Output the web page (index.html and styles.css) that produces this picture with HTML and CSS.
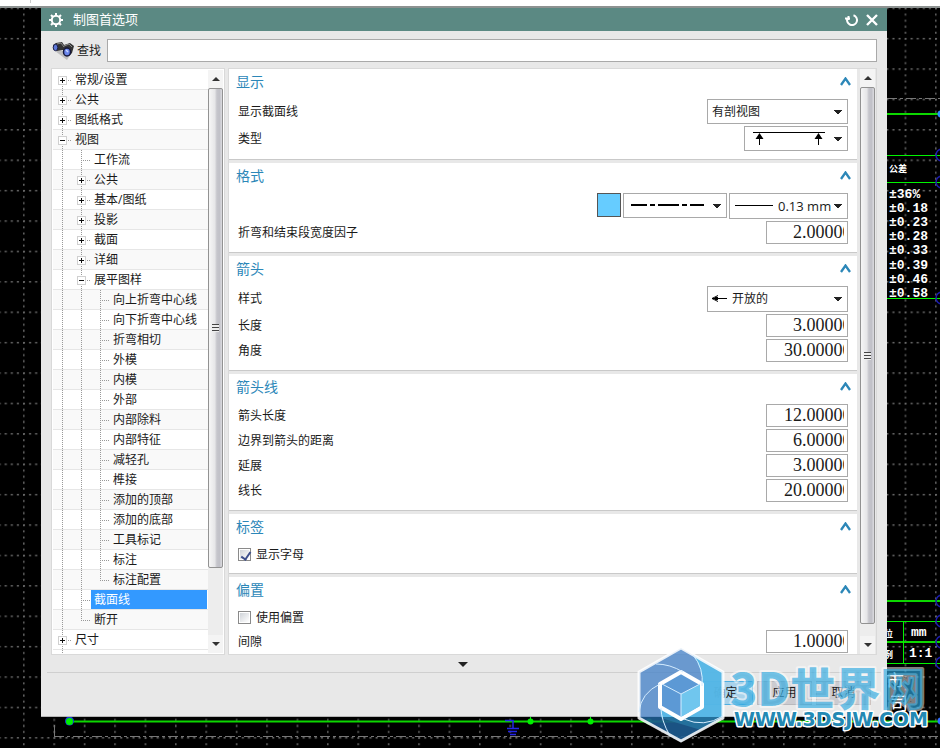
FILE: index.html
```html
<!DOCTYPE html>
<html lang="zh-CN">
<head>
<meta charset="utf-8">
<title>制图首选项</title>
<link rel="stylesheet" href="styles.css">
</head>
<body>
<svg class="cad" aria-hidden="true">
  <defs>
    <pattern id="grid" x="23" y="7.5" width="30.4" height="30.4" patternUnits="userSpaceOnUse">
      <path d="M0 .8H30.4" stroke="#707070" stroke-width="1.5" stroke-dasharray="2 4.08"/>
      <path d="M.8 0V30.4" stroke="#666" stroke-width="1.5" stroke-dasharray="2 4.08"/>
    </pattern>
  </defs>
  <rect y="7" width="100%" height="100%" fill="#000"/>
  <rect y="8" width="100%" height="100%" fill="url(#grid)"/>
  <rect width="100%" height="6" fill="#fff"/>
  <rect y="6" width="100%" height="2" fill="#8d9291"/>
  <path d="M30.500 0V3" stroke="#ccc"/>
  <g fill="none" stroke="#777"><path d="M887 98.500H940M54 736.500H940" stroke-dasharray="10 3 3 3"/><path d="M54.500 725V736"/></g>
  <g fill="none" stroke="#0cd800">
    <path d="M887 114H940M887 601H940M887 642H940M69 721.500H940" stroke-width="2"/>
    <path d="M887 155.500H940M887 182.500H940M887 298.500H940M887 621.500H940M887 663.500H940M903.500 621V663" stroke="#00f400"/>
  </g>
  <g fill="none" stroke="#1c1cae" stroke-width="1.500"><circle cx="942" cy="155" r="6"/><circle cx="942" cy="182" r="6"/><circle cx="942" cy="298" r="6"/><circle cx="942" cy="601" r="6"/><circle cx="942" cy="621" r="6"/><circle cx="942" cy="642" r="6"/><circle cx="942" cy="663" r="6"/></g>
  <circle cx="941" cy="114" r="3.500" fill="#2b8cff"/><circle cx="941" cy="721" r="3.500" fill="#2b6cff"/>
  <circle cx="69.500" cy="721" r="4.500" fill="#1838d8"/>
  <g fill="#00f000"><circle cx="69.500" cy="721.500" r="3.500"/><circle cx="530.500" cy="721.500" r="3"/><circle cx="590.500" cy="721.500" r="3"/><circle cx="649" cy="721.500" r="3"/><path d="M530 717h1v4h-1zM590 717h1v4h-1z"/></g>
  <path d="M505 720.500H513V728M507 728.500H519M508 731.500H517M510 734.500H516" stroke="#2424e8" stroke-width="1.500" fill="none"/>
  <g class="cad-text">
    <text x="889" y="172" class="cad-small">公差</text>
    <text x="889" y="198">±36%</text><text x="889" y="212">±0.18</text><text x="889" y="226">±0.23</text><text x="889" y="240">±0.28</text><text x="889" y="254">±0.33</text><text x="889" y="269">±0.39</text><text x="889" y="283">±0.46</text><text x="889" y="297">±0.58</text>
    <text x="884" y="637" class="cad-small">位</text><text x="884" y="658" class="cad-small">例</text>
    <text x="911" y="636">mm</text><text x="909" y="657">1:1</text>
    <text x="886" y="688" class="cad-large">市</text><text x="890" y="710" class="cad-large">司</text>
  </g>
</svg>

<main class="dialog">
  <header class="titlebar">
    <svg class="gear" viewBox="0 0 14 14" width="14" height="14" aria-hidden="true"><circle cx="7" cy="7" r="4.200" fill="none" stroke="#fff" stroke-width="2"/><path d="M7 0V3M7 11V14M0 7H3M11 7H14M2 2L4 4M10 10L12 12M12 2L10 4M2 12L4 10" stroke="#fff" stroke-width="2"/></svg>
    <h1>制图首选项</h1>
    <button class="title-btn" aria-label="重置"><svg width="14" height="14" viewBox="0 0 14 14"><path d="M8.500 2.300A5 5 0 1 1 2.500 5M0 5.500H5M3.500 3V7" fill="none" stroke="#fff" stroke-width="2"/></svg></button>
    <button class="title-btn" aria-label="关闭"><svg width="14" height="14" viewBox="0 0 14 14"><path d="M2 2L12 12M12 2L2 12" stroke="#fff" stroke-width="2.400"/></svg></button>
  </header>

  <div class="search">
    <svg width="22" height="18" viewBox="0 0 22 18" aria-hidden="true"><path d="M3 9L15 18L20 10L12 9Z" fill="#bdbdbd"/><path d="M1 3L4 1L10 0L12 3L18 1L22 4L20 11L17 14L13 13L11 8L5 9L1 6Z" fill="#333"/><path d="M5 2L9 1L12 5M12 4L17 2L20 5" stroke="#8a8a8a" fill="none"/><ellipse cx="3.500" cy="5.500" rx="2.300" ry="3.200" fill="#5e78d8" stroke="#1d2148"/><ellipse cx="15" cy="10" rx="3.500" ry="4" fill="#6a86ec" stroke="#15183c" stroke-width="1.500"/><path d="M14 8L16 10" stroke="#c9d6ff" stroke-width="1.500"/></svg>
    <label for="find">查找</label>
    <input id="find" type="text">
  </div>

  <div class="panels">
    <nav class="tree-panel" aria-label="类别">
      <ul class="tree">
        <li><button class="rail first" aria-label="展开"><i class="plus"></i></button><span>常规/设置</span></li>
        <li><button class="rail" aria-label="展开"><i class="plus"></i></button><span>公共</span></li>
        <li><button class="rail" aria-label="展开"><i class="plus"></i></button><span>图纸格式</span></li>
        <li><button class="rail" aria-label="折叠"><i class="minus"></i></button><span>视图</span></li>
        <li><b class="rail"></b><b class="rail tee"></b><span>工作流</span></li>
        <li><b class="rail"></b><button class="rail" aria-label="展开"><i class="plus"></i></button><span>公共</span></li>
        <li><b class="rail"></b><button class="rail" aria-label="展开"><i class="plus"></i></button><span>基本/图纸</span></li>
        <li><b class="rail"></b><button class="rail" aria-label="展开"><i class="plus"></i></button><span>投影</span></li>
        <li><b class="rail"></b><button class="rail" aria-label="展开"><i class="plus"></i></button><span>截面</span></li>
        <li><b class="rail"></b><button class="rail" aria-label="展开"><i class="plus"></i></button><span>详细</span></li>
        <li><b class="rail"></b><button class="rail" aria-label="折叠"><i class="minus"></i></button><span>展平图样</span></li>
        <li><b class="rail"></b><b class="rail"></b><b class="rail tee"></b><span>向上折弯中心线</span></li>
        <li><b class="rail"></b><b class="rail"></b><b class="rail tee"></b><span>向下折弯中心线</span></li>
        <li><b class="rail"></b><b class="rail"></b><b class="rail tee"></b><span>折弯相切</span></li>
        <li><b class="rail"></b><b class="rail"></b><b class="rail tee"></b><span>外模</span></li>
        <li><b class="rail"></b><b class="rail"></b><b class="rail tee"></b><span>内模</span></li>
        <li><b class="rail"></b><b class="rail"></b><b class="rail tee"></b><span>外部</span></li>
        <li><b class="rail"></b><b class="rail"></b><b class="rail tee"></b><span>内部除料</span></li>
        <li><b class="rail"></b><b class="rail"></b><b class="rail tee"></b><span>内部特征</span></li>
        <li><b class="rail"></b><b class="rail"></b><b class="rail tee"></b><span>减轻孔</span></li>
        <li><b class="rail"></b><b class="rail"></b><b class="rail tee"></b><span>榫接</span></li>
        <li><b class="rail"></b><b class="rail"></b><b class="rail tee"></b><span>添加的顶部</span></li>
        <li><b class="rail"></b><b class="rail"></b><b class="rail tee"></b><span>添加的底部</span></li>
        <li><b class="rail"></b><b class="rail"></b><b class="rail tee"></b><span>工具标记</span></li>
        <li><b class="rail"></b><b class="rail"></b><b class="rail tee"></b><span>标注</span></li>
        <li><b class="rail"></b><b class="rail"></b><b class="rail tee last"></b><span>标注配置</span></li>
        <li class="selected"><b class="rail"></b><b class="rail tee"></b><span>截面线</span></li>
        <li><b class="rail"></b><b class="rail tee last"></b><span>断开</span></li>
        <li><button class="rail" aria-label="展开"><i class="plus"></i></button><span>尺寸</span></li>
        <li class="more"><b class="rail"></b></li>
      </ul>
      <div class="scrollbar tree-scroll"><button class="up" aria-label="向上"></button><div class="thumb"><i></i></div><div class="track"></div><button class="down" aria-label="向下"></button></div>
    </nav>

    <div class="options">
      <div class="sections">
        <section>
          <h2>显示<button class="fold" aria-label="折叠"><svg width="11" height="9" viewBox="0 0 11 9"><path d="M1 8L5.500 1.500L10 8" fill="none" stroke="#2c87b8" stroke-width="2.300"/></svg></button></h2>
          <div class="row"><label for="show">显示截面线</label><select id="show" class="wide short"><option>有剖视图</option></select></div>
          <div class="row"><label for="type">类型</label><div class="picture medium"><select id="type" class="short"><option aria-label="箭头"></option></select><svg width="74" height="16" viewBox="0 0 74 16"><path d="M1 2.500H73" stroke="#000"/><path d="M7.500 3L11.500 9H3.500ZM7 8h1v7H7zM66.500 3L70.500 9H62.500ZM66 8h1v7H66z"/></svg></div></div>
        </section>
        <section>
          <h2>格式<button class="fold" aria-label="折叠"><svg width="11" height="9" viewBox="0 0 11 9"><path d="M1 8L5.500 1.500L10 8" fill="none" stroke="#2c87b8" stroke-width="2.300"/></svg></button></h2>
          <div class="row end"><button class="swatch" aria-label="颜色"></button><div class="picture medium"><select class="short" aria-label="线型"><option aria-label="点划线"></option></select><svg width="74" height="16" viewBox="0 0 74 16"><path d="M0 8H16M19 8H24M27 8H48M51 8H56M59 8H73" stroke="#000" stroke-width="2"/></svg></div><div class="picture weight"><select aria-label="线宽"><option>0.13 mm</option></select><svg width="38" height="16" viewBox="0 0 38 16"><path d="M0 8.500H38" stroke="#000"/></svg></div></div>
          <div class="row"><label for="factor">折弯和结束段宽度因子</label><input id="factor" class="number" value="2.00000"></div>
        </section>
        <section>
          <h2>箭头<button class="fold" aria-label="折叠"><svg width="11" height="9" viewBox="0 0 11 9"><path d="M1 8L5.500 1.500L10 8" fill="none" stroke="#2c87b8" stroke-width="2.300"/></svg></button></h2>
          <div class="row"><label for="style">样式</label><div class="picture wide arrow"><select id="style"><option>开放的</option></select><svg width="16" height="16" viewBox="0 0 16 16"><path d="M1 8.500H16M7 5.500L1 8.500L7 11.500M4 7.500H7M4 9.500H7" stroke="#000" fill="none"/></svg></div></div>
          <div class="row"><label for="len">长度</label><input id="len" class="number" value="3.00000"></div>
          <div class="row"><label for="angle">角度</label><input id="angle" class="number tens" value="30.00000"></div>
        </section>
        <section>
          <h2>箭头线<button class="fold" aria-label="折叠"><svg width="11" height="9" viewBox="0 0 11 9"><path d="M1 8L5.500 1.500L10 8" fill="none" stroke="#2c87b8" stroke-width="2.300"/></svg></button></h2>
          <div class="row"><label for="alen">箭头长度</label><input id="alen" class="number tens" value="12.00000"></div>
          <div class="row"><label for="dist">边界到箭头的距离</label><input id="dist" class="number" value="6.00000"></div>
          <div class="row"><label for="ext">延展</label><input id="ext" class="number" value="3.00000"></div>
          <div class="row"><label for="line">线长</label><input id="line" class="number tens" value="20.00000"></div>
        </section>
        <section>
          <h2>标签<button class="fold" aria-label="折叠"><svg width="11" height="9" viewBox="0 0 11 9"><path d="M1 8L5.500 1.500L10 8" fill="none" stroke="#2c87b8" stroke-width="2.300"/></svg></button></h2>
          <div class="row check"><input id="letter" type="checkbox" checked><label for="letter">显示字母</label></div>
        </section>
        <section>
          <h2>偏置<button class="fold" aria-label="折叠"><svg width="11" height="9" viewBox="0 0 11 9"><path d="M1 8L5.500 1.500L10 8" fill="none" stroke="#2c87b8" stroke-width="2.300"/></svg></button></h2>
          <div class="row check"><input id="offset" type="checkbox"><label for="offset">使用偏置</label></div>
          <div class="row"><label for="gap">间隙</label><input id="gap" class="number" value="1.00000"></div>
        </section>
      </div>
      <div class="scrollbar options-scroll"><button class="up" aria-label="向上"></button><div class="thumb"><i></i></div><div class="track"></div><button class="down" aria-label="向下"></button></div>
    </div>
  </div>

  <button class="expand" aria-label="更多"><i></i></button>
  <footer><button class="primary">确定</button><button>应用</button><button>取消</button></footer>

  <svg class="brand" width="302" height="98" viewBox="0 0 302 98" aria-hidden="true">
    <g stroke-linejoin="round">
      <path d="M45 3L87 27V73L45 97L3 73V27Z" fill="#4a85c8" fill-opacity=".8"/>
      <path d="M57 10L87 27V73L65 85L25 73L24 62L45 74L66 61V38Q66 23 57 10Z" fill="#56bdea" fill-opacity=".85"/>
      <path d="M3 72H87V73L45 97L3 73Z" fill="#06456f" fill-opacity=".6"/>
      <path d="M45 3L87 27V73L45 96L3 73V27Z" fill="none" stroke="#fff" stroke-width="3" stroke-opacity=".85"/>
      <path d="M45 27L66 39V62L45 74L24 62V39Z" fill="#5c99d5" stroke="#fff" stroke-width="4"/>
      <path d="M45 49L64 39V61L45 72Z" fill="#70c6ee"/>
      <path d="M26 39L45 49L64 39M45 49V72M57 10Q68 23 66 41M24 39Q5 48 3 67M20 19Q34 19 47 27M25 63Q25 75 34 91M48 74Q68 83 87 71" fill="none" stroke="#d5edff"/>
    </g>
    <text x="94" y="61" class="brand-name">3D世界网</text>
    <text x="98" y="81" class="brand-url">WWW.3DSJW.COM</text>
  </svg>
</main>
</body>
</html>
```
FILE: styles.css
```css
* { box-sizing: border-box; }
body {
  margin: 0;
  padding: 8px 53px 31px 41px;
  position: relative;
  min-height: 100vh;
  background: #000;
  color: #1a1a1a;
  font: 12px/20px "Open Sans", "Noto Sans CJK SC", sans-serif;
}
button { padding: 0; border: 0; background: none; font: inherit; color: inherit; }
h1, h2, ul { margin: 0; padding: 0; font-weight: normal; }

/* drawing canvas behind the dialog */
.cad { position: absolute; left: 0; top: 0; width: 100%; height: 100%; }
.cad-text { font: bold 13px "Liberation Mono", "Noto Sans CJK SC", monospace; fill: #fff; }
.cad-small { font-size: 9px; }
.cad-large { font-size: 18px; font-weight: normal; }

.dialog { position: relative; background: #e8e8e8; border-bottom: 1px solid #b5b5b5; }
.titlebar { display: flex; align-items: center; height: 23px; padding: 0 8px; background: #5b8983; color: #fff; }
.gear { margin-right: 10px; }
.titlebar h1 { flex: 1; font-size: 13px; line-height: 23px; }
.title-btn { display: flex; margin-left: 6px; }

.search { display: flex; align-items: center; padding: 8px 10px 6px 11px; }
.search label { margin: 0 6px 0 3px; }
.search input { flex: 1; min-width: 0; height: 23px; border: 1px solid #a9a9a9; background: #fff; }

.panels { display: flex; gap: 3px; padding: 0 10px; }
.tree-panel { display: flex; width: 174px; border: 1px solid #d9d9d9; background: #fff; padding: 1px; }
.tree { display: flex; flex-direction: column; flex: 1; list-style: none; min-width: 0; }
.tree li { display: flex; height: 20px; border-bottom: 1px solid #e6e6e6; white-space: nowrap; }
.tree li:nth-child(even) { background: #f9f9f9; }
.tree li.more { flex: 1; height: auto; border: 0; background: none; }
.tree span { flex: 1; margin-right: 1px; padding-left: 3px; line-height: 19px; }
.tree .selected span { background: #3399ff; color: #fff; }
.rail {
  flex: none;
  width: 19px;
  display: flex;
  align-items: center;
  background:
    repeating-linear-gradient(#999 0 1px, transparent 1px 2px) 9px 0 / 1px 100% no-repeat;
}
.rail.tee, button.rail {
  background:
    repeating-linear-gradient(#999 0 1px, transparent 1px 2px) 9px 0 / 1px 100% no-repeat,
    repeating-linear-gradient(90deg, #999 0 1px, transparent 1px 2px) 9px 10px / 9px 1px no-repeat;
}
.rail.last {
  background:
    repeating-linear-gradient(#999 0 1px, transparent 1px 2px) 9px 0 / 1px 10px no-repeat,
    repeating-linear-gradient(90deg, #999 0 1px, transparent 1px 2px) 9px 10px / 9px 1px no-repeat;
}
button.rail.first {
  background:
    repeating-linear-gradient(#999 0 1px, transparent 1px 2px) 9px 10px / 1px 10px no-repeat,
    repeating-linear-gradient(90deg, #999 0 1px, transparent 1px 2px) 9px 10px / 9px 1px no-repeat;
}
.plus, .minus {
  width: 9px;
  height: 9px;
  margin: 1px 0 0 5px;
  border: 1px solid #d0d0d0;
  background: linear-gradient(#111, #111) center / 5px 1px no-repeat #fff;
}
.plus { background: linear-gradient(#111, #111) center / 5px 1px no-repeat, linear-gradient(#111, #111) center / 1px 5px no-repeat #fff; }

.scrollbar { display: flex; flex-direction: column; width: 15px; background: #ededed; }
.scrollbar button { display: flex; flex: none; align-items: center; justify-content: center; height: 18px; background: #f4f4f4; }
.up::before, .down::before { content: ""; border: 4px solid transparent; border-top-width: 0; border-bottom: 4px solid #333; }
.down::before { border-bottom-width: 0; border-top: 4px solid #333; }
.thumb {
  display: flex;
  align-items: center;
  justify-content: center;
  border: 1px solid #929292;
  border-radius: 2px;
  background: linear-gradient(90deg, #f6f6f6, #e6e6e8 45%, #c6c6cc 60%, #c0c0c7 80%, #dcdce0);
}
.thumb i { width: 7px; height: 8px; background: repeating-linear-gradient(#444 0 1px, #eee 1px 3px); }
.tree-scroll .thumb { flex: 481; }
.tree-scroll .track { flex: 67; }
.options-scroll { margin-right: 1px; }
.options-scroll .thumb { flex: 537; }
.options-scroll .track { flex: 12; }

.options { display: flex; flex: 1; gap: 3px; min-width: 0; border: 1px solid #d9d9d9; }
.sections { flex: 1; min-width: 0; }
section { margin-bottom: 3px; padding: 0 9px 8px; background: #fff; border-bottom: 1px solid #c9c9c9; }
section:last-child { margin: 0; padding-bottom: 1px; border: 0; }
h2 { display: flex; height: 30px; margin: 0 -3px 0 -2px; color: #2c87b8; font-size: 14px; line-height: 26px; }
.fold { display: flex; height: 25px; margin-left: auto; align-items: center; }
.row { display: flex; align-items: center; gap: 2px; }
.row + .row { margin-top: 2px; }
.row label { margin-right: auto; }
.row.end { align-items: flex-start; justify-content: flex-end; }
.check { height: 21px; gap: 5px; }

select {
  appearance: none;
  width: 100%;
  height: 26px;
  padding: 0 14px 0 4px;
  border: 1px solid #a9a9a9;
  border-radius: 0;
  background:
    linear-gradient(to bottom left, #222 50%, transparent 52%) right 9px center / 4px 4px no-repeat,
    linear-gradient(to bottom right, #222 50%, transparent 52%) right 5px center / 4px 4px no-repeat,
    #fff;
  color: #1a1a1a;
  font: inherit;
}
.short { height: 25px; }
.wide { width: 141px; }
.medium { width: 104px; }
.weight { width: 119px; }
.picture { position: relative; display: flex; }
.picture svg { position: absolute; left: 8px; top: 4px; pointer-events: none; }
.weight svg { left: 6px; }
.weight select { padding-left: 48px; }
.arrow svg { left: 4px; }
.arrow select { padding-left: 24px; }
.weight select { font-size: 13px; }
.swatch { width: 24px; height: 24px; border: 1px solid #555; background: #66ccff; }
.number {
  width: 82px;
  height: 23px;
  padding: 0 3px 0 26px;
  border: 1px solid #a9a9a9;
  background: #fff;
  color: #1a1a1a;
  font: 18px/20px "Liberation Serif", serif;
}
.number.tens { padding-left: 17px; }
input[type="checkbox"] {
  appearance: none;
  width: 13px;
  height: 13px;
  margin: 0;
  border: 1px solid #8a8a8a;
  background: linear-gradient(135deg, #cfd3d8, #fff) content-box #f4f4f4;
  padding: 1px;
}
input[type="checkbox"]:checked::before {
  content: "";
  display: block;
  width: 4px;
  height: 8px;
  margin-left: 3px;
  border: solid #3d4f8c;
  border-width: 0 2px 2px 0;
  transform: rotate(35deg);
}

.expand { display: flex; width: 100%; height: 17px; padding: 7px 0 0 417px; }
.expand i { border: 5px solid transparent; border-top-color: #222; border-bottom: 0; }
footer { display: flex; justify-content: flex-end; gap: 4px; margin: 0 6px; padding: 8px 10px 11px; border-top: 1px solid #cfcfcf; }
footer button { width: 55px; height: 24px; border: 1px solid #b9b9bd; background: #cbcbd0; }
footer .primary { border-color: #50aee0; background: #a9d2ea; }

.brand { position: absolute; right: -51px; bottom: -27px; pointer-events: none; }
.brand text { stroke: #fff; paint-order: stroke; stroke-linejoin: round; }
.brand-name { font: 900 45px "Noto Sans CJK SC", sans-serif; stroke-width: 4px; stroke-opacity: .5; fill: #2fa9e0; fill-opacity: .68; }
.brand-url { font: bold 19px "DejaVu Sans", sans-serif; stroke-width: 3px; fill: #2389b4; }
```
